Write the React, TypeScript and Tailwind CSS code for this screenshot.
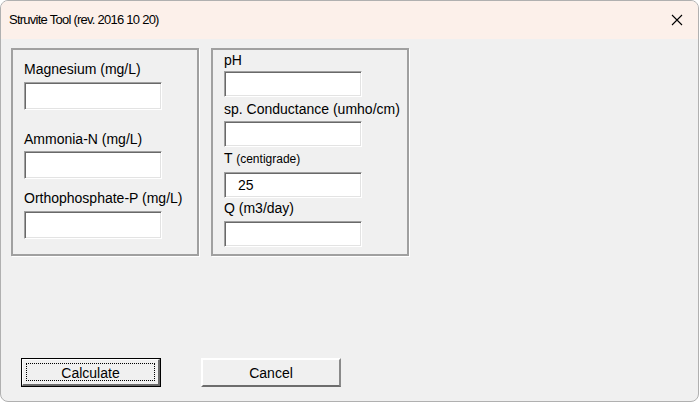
import React from 'react';

const FONT = { fontFamily: '"Liberation Sans", Arial, sans-serif' };

function TextBox({ value, h = 'h-[28px]' }: { value?: string; h?: string }) {
  return (
    <div
      className={`${h} w-[138px] border border-t-[#a0a0a0] border-l-[#a0a0a0] border-r-white border-b-white bg-white shadow-[inset_1px_1px_0_#696969,inset_-1px_-1px_0_#e3e3e3] flex items-center pl-[13px] pt-[1px] text-[14px] text-black`}
    >
      {value}
    </div>
  );
}

function Label({ children, className = '' }: { children: React.ReactNode; className?: string }) {
  return <div className={`h-[16px] leading-[16px] text-[14px] text-black whitespace-nowrap ${className}`}>{children}</div>;
}

export default function App() {
  return (
    <div className="w-[699px] h-[402px] bg-white" style={FONT}>
      <div className="w-full h-full flex flex-col overflow-hidden rounded-lg border border-[#b0b0b0] bg-[#f0f0f0]">
        {/* title bar */}
        <div className="h-[38px] shrink-0 bg-[#fcf0ea] flex items-center justify-between pl-[8px] pr-[15px]">
          <span className="text-[13px] tracking-[-0.75px] text-black">Struvite Tool (rev. 2016 10 20)</span>
          <svg width="12" height="12" viewBox="0 0 12 12">
            <path d="M1 1 L11 11 M11 1 L1 11" stroke="#000" strokeWidth="1.1" fill="none" />
          </svg>
        </div>

        {/* frames */}
        <div className="flex gap-[12px] pl-[10px] pt-[9px]">
          <div className="w-[188px] h-[208px] border-2 border-[#a0a0a0] shadow-[1px_1px_0_#fff] pl-[11px] pt-[11px]">
            <Label>Magnesium (mg/L)</Label>
            <div className="mt-[5px]"><TextBox /></div>
            <Label className="mt-[21px]">Ammonia-N (mg/L)</Label>
            <div className="mt-[4px]"><TextBox /></div>
            <Label className="mt-[11px]">Orthophosphate-P (mg/L)</Label>
            <div className="mt-[5px]"><TextBox /></div>
          </div>

          <div className="w-[198px] h-[208px] border-2 border-[#a0a0a0] shadow-[1px_1px_0_#fff] pl-[11px] pt-[2px]">
            <Label>pH</Label>
            <div className="mt-[3px]"><TextBox h="h-[26px]" /></div>
            <Label className="mt-[4px]">sp. Conductance (umho/cm)</Label>
            <div className="mt-[4px]"><TextBox h="h-[26px]" /></div>
            <Label className="mt-[3px]">
              T <span className="text-[12px]">(centigrade)</span>
            </Label>
            <div className="mt-[6px]"><TextBox h="h-[26px]" value="25" /></div>
            <Label className="mt-[2px]">Q (m3/day)</Label>
            <div className="mt-[5px]"><TextBox h="h-[26px]" /></div>
          </div>
        </div>

        {/* buttons */}
        <div className="flex gap-[40px] pl-[20px] mt-[102px]">
          <div className="w-[140px] h-[29px] border border-black">
            <div className="w-full h-full border-t border-l border-t-white border-l-white border-r-2 border-b-2 border-r-[#696969] border-b-[#696969] bg-[#f0f0f0] p-[3px]">
              <div className="w-full h-full border border-dotted border-black flex items-center justify-center pt-[2px] text-[14px] text-black">
                Calculate
              </div>
            </div>
          </div>
          <div className="w-[140px] h-[29px] border-t-2 border-l-2 border-t-white border-l-white border-r-2 border-b-2 border-r-[#8a8a8a] border-b-[#6d6d6d] bg-[#f0f0f0] flex items-center justify-center pt-[2px] text-[14px] text-black">
            Cancel
          </div>
        </div>
      </div>
    </div>
  );
}
